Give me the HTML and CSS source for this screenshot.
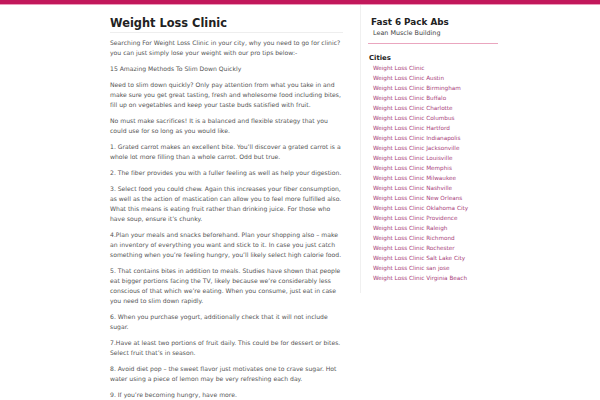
FILE: index.html
```html
<!DOCTYPE html>
<html>
<head>
<meta charset="utf-8">
<link rel="stylesheet" href="styles.css">
</head>
<body>
<div class="topbar"></div>
<div class="wrap">
  <main class="main">
    <h1 class="title">Weight Loss Clinic</h1>
    <p>Searching For Weight Loss Clinic in your city, why you need to go for clinic? you can just simply lose your weight with our pro tips below:-</p>
    <p>15 Amazing Methods To Slim Down Quickly</p>
    <p>Need to slim down quickly? Only pay attention from what you take in and make sure you get great tasting, fresh and wholesome food including bites, fill up on vegetables and keep your taste buds satisfied with fruit.</p>
    <p>No must make sacrifices! It is a balanced and flexible strategy that you could use for so long as you would like.</p>
    <p>1. Grated carrot makes an excellent bite. You’ll discover a grated carrot is a whole lot more filling than a whole carrot. Odd but true.</p>
    <p>2. The fiber provides you with a fuller feeling as well as help your digestion.</p>
    <p>3. Select food you could chew. Again this increases your fiber consumption, as well as the action of mastication can allow you to feel more fulfilled also. What this means is eating fruit rather than drinking juice. For those who have soup, ensure it’s chunky.</p>
    <p>4.Plan your meals and snacks beforehand. Plan your shopping also – make an inventory of everything you want and stick to it. In case you just catch something when you’re feeling hungry, you’ll likely select high calorie food.</p>
    <p>5. That contains bites in addition to meals. Studies have shown that people eat bigger portions facing the TV, likely because we’re considerably less conscious of that which we’re eating. When you consume, just eat in case you need to slim down rapidly.</p>
    <p>6. When you purchase yogurt, additionally check that it will not include sugar.</p>
    <p>7.Have at least two portions of fruit daily. This could be for dessert or bites. Select fruit that’s in season.</p>
    <p>8. Avoid diet pop – the sweet flavor just motivates one to crave sugar. Hot water using a piece of lemon may be very refreshing each day.</p>
    <p>9. If you’re becoming hungry, have more.</p>
  </main>
  <aside class="side">
    <div class="brand">
      <div class="brand-name">Fast 6 Pack Abs</div>
      <div class="brand-tag">Lean Muscle Building</div>
    </div>
    <h2 class="widget-title">Cities</h2>
    <ul class="cities">
      <li><a href="#">Weight Loss Clinic</a></li>
      <li><a href="#">Weight Loss Clinic Austin</a></li>
      <li><a href="#">Weight Loss Clinic Birmingham</a></li>
      <li><a href="#">Weight Loss Clinic Buffalo</a></li>
      <li><a href="#">Weight Loss Clinic Charlotte</a></li>
      <li><a href="#">Weight Loss Clinic Columbus</a></li>
      <li><a href="#">Weight Loss Clinic Hartford</a></li>
      <li><a href="#">Weight Loss Clinic Indianapolis</a></li>
      <li><a href="#">Weight Loss Clinic Jacksonville</a></li>
      <li><a href="#">Weight Loss Clinic Louisville</a></li>
      <li><a href="#">Weight Loss Clinic Memphis</a></li>
      <li><a href="#">Weight Loss Clinic Milwaukee</a></li>
      <li><a href="#">Weight Loss Clinic Nashville</a></li>
      <li><a href="#">Weight Loss Clinic New Orleans</a></li>
      <li><a href="#">Weight Loss Clinic Oklahoma City</a></li>
      <li><a href="#">Weight Loss Clinic Providence</a></li>
      <li><a href="#">Weight Loss Clinic Raleigh</a></li>
      <li><a href="#">Weight Loss Clinic Richmond</a></li>
      <li><a href="#">Weight Loss Clinic Rochester</a></li>
      <li><a href="#">Weight Loss Clinic Salt Lake City</a></li>
      <li><a href="#">Weight Loss Clinic san jose</a></li>
      <li><a href="#">Weight Loss Clinic Virginia Beach</a></li>
    </ul>
  </aside>
</div>
</body>
</html>
```
FILE: styles.css
```css
html, body {
  margin: 0;
  padding: 0;
  background: #fff;
  font-family: "DejaVu Sans", Verdana, sans-serif;
  color: #555;
}
.topbar {
  height: 4px;
  background: #c2185b;
  border-bottom: 1px solid #ec9cbb;
}
.wrap {
  display: flex;
  width: 390px;
  margin-left: 110px;
}
.main {
  width: 235px;
  flex: none;
  padding-top: 11px;
}
.title {
  margin: 0 0 5px;
  font-size: 11.4px;
  line-height: 14px;
  color: #222;
  font-weight: bold;
  padding-bottom: 2px;
  border-bottom: 1px solid #eee;
  margin-right: 2px;
}
.main p {
  margin: 0 0 6px;
  font-size: 6.1px;
  line-height: 10px;
}
.side {
  margin-left: 15px;
  border-left: 1px solid #f0f0f0;
  padding-left: 8px;
  padding-top: 11px;
  align-self: flex-start;
  width: 130px;
  padding-bottom: 10px;
}
.brand {
  padding: 0 0 5px 3px;
  margin-left: -1px;
  border-bottom: 1px solid #eaa6bf;
  margin-right: 1px;
}
.brand-name {
  font-size: 8.8px;
  font-weight: bold;
  color: #222;
  line-height: 12px;
}
.brand-tag {
  font-size: 6.4px;
  line-height: 10px;
  color: #444;
  padding-left: 2px;
}
.widget-title {
  margin: 9px 0 0;
  font-size: 6.9px;
  line-height: 10px;
  color: #222;
  font-weight: bold;
}
.cities {
  list-style: none;
  margin: 0;
  padding: 0 0 0 4px;
}
.cities li {
  font-size: 5.7px;
  line-height: 10px;
}
.cities a {
  color: #a8407a;
  text-decoration: none;
}
```
